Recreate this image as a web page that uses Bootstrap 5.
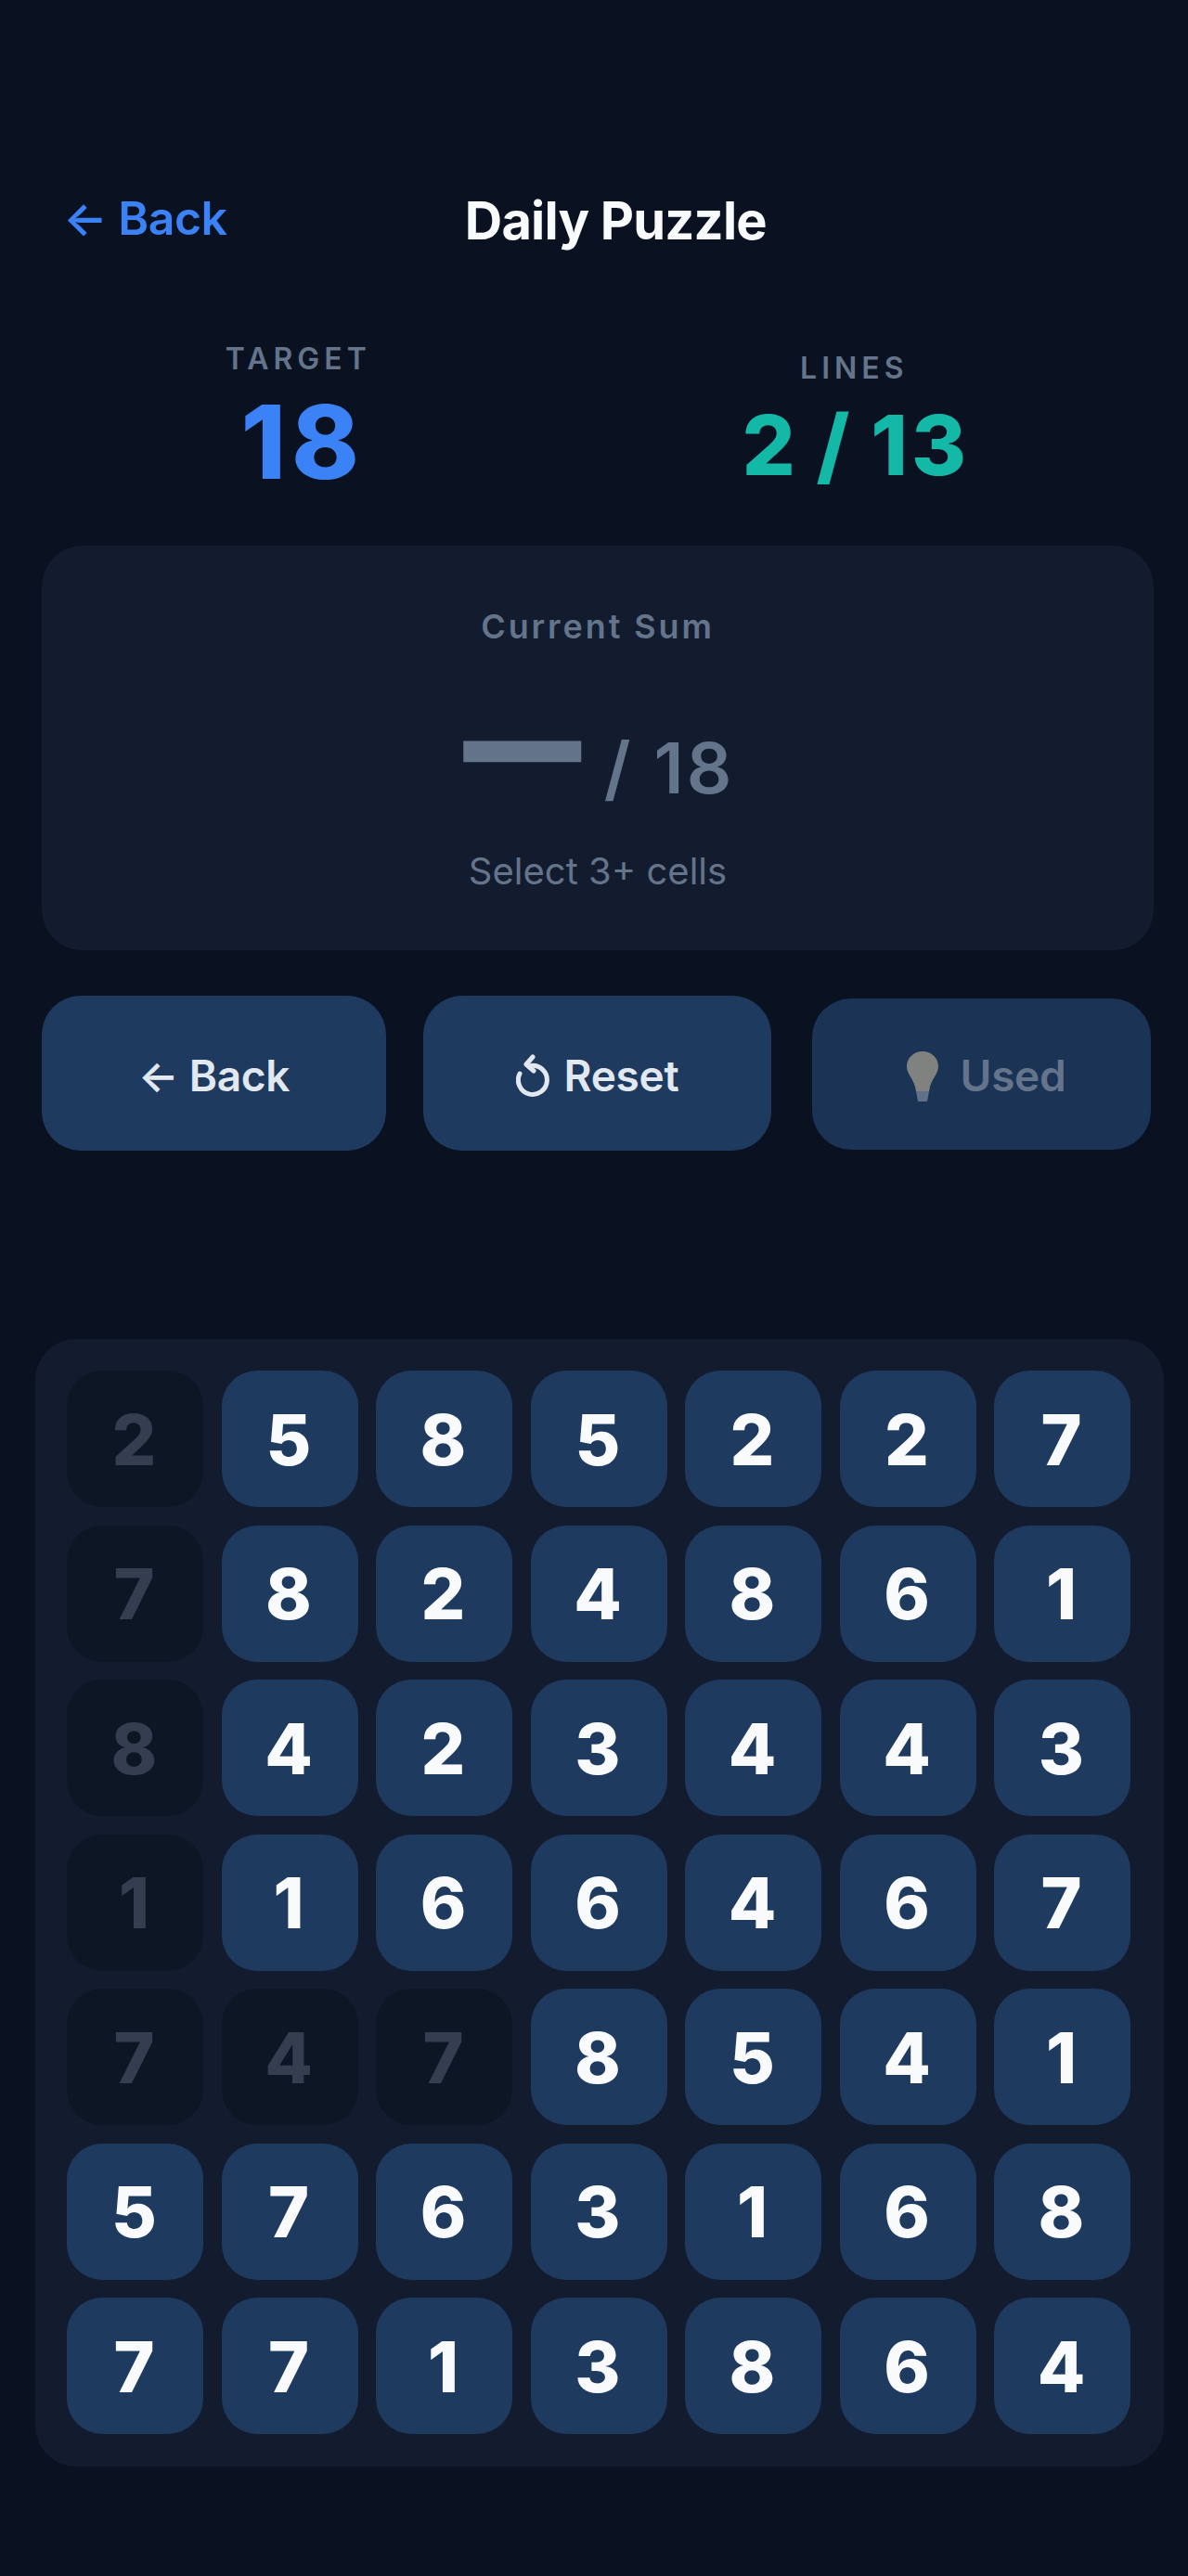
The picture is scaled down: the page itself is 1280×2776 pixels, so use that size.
<!DOCTYPE html>
<html lang="en">
<head>
<meta charset="utf-8">
<title>Daily Puzzle</title>
<link href="https://cdn.jsdelivr.net/npm/bootstrap@5.3.0/dist/css/bootstrap.min.css" rel="stylesheet">
<style>
html,body{background:#0a1120;}
body{font-family:"Inter","Liberation Sans",sans-serif;min-height:2776px;}
.shell{padding:202px 37px 0 45px;}
.topbar{height:72px;}
.backlink{color:#3b82f6;font-size:50px;font-weight:600;text-decoration:none;margin-left:23px;margin-bottom:6px;line-height:72px;letter-spacing:-.5px;}
.pagetitle{color:#f8fafc;font-size:56px;font-weight:700;margin:0;line-height:72px;letter-spacing:-.8px;}
.spacer{width:161px;}
.stats{margin-top:91px;height:178px;}
.statlabel{color:#64748b;font-size:32px;font-weight:600;letter-spacing:5px;line-height:44px;}
.stattarget{color:#3b82f6;font-size:110px;font-weight:800;line-height:134px;letter-spacing:6px;margin-left:10px;}
.statcol-lines{margin-top:10px;}
.statlines{color:#14b8a6;font-size:90px;font-weight:800;line-height:122px;letter-spacing:4px;word-spacing:-5px;margin-left:4px;}
.sumpanel{background:#131c2e;border-radius:44px;height:436px;margin-top:45px;width:1198px;padding-top:63px;}
.sumlabel{color:#64748b;font-size:36px;font-weight:600;letter-spacing:2.9px;line-height:48px;}
.sumvalue{margin-top:58px;height:110px;line-height:110px;padding-left:6px;}
.dash{color:#64748b;font-size:120px;font-weight:800;line-height:110px;-webkit-text-stroke:7px #64748b;transform:translateY(-10px);}
.of{color:#64748b;font-size:76px;font-weight:600;margin-left:28px;letter-spacing:3px;}
.sumhint{color:#64748b;font-size:40px;line-height:52px;margin-top:46px;}
.actions{margin-top:49px;width:1198px;}
.act{border:0;border-radius:42px;background:#1e3a5f;color:#e2e8f0;font-size:46px;font-weight:600;height:167px;padding:5px 0 0;letter-spacing:-.3px;}
.act svg{flex:none;}
.act-a{width:371px;}
.act-b{width:375px;margin-left:40px;}
.act-c{width:365px;height:163px;margin-left:44px;margin-top:3px;padding:4px 0 0 10px;}
.act-c:disabled{background:#1b3355;color:#64748b;opacity:1;}
.board{margin-top:203px;margin-left:-7px;width:1216px;height:1215px;background:#131c2e;border-radius:44px;padding:34px;display:grid;grid-template-columns:repeat(7,147px);grid-auto-rows:147px;gap:19.5px;}
.tile{background:#1e3a5f;color:#f8fafc;border-radius:38px;font-size:75px;font-weight:800;padding:3px 2px 0 0;}
.tile.off{background:#0d1625;color:#343e50;}
</style>
</head>
<body>
<main class="shell">
  <header class="topbar d-flex justify-content-between align-items-center">
    <a class="backlink" href="#">← Back</a>
    <h1 class="pagetitle">Daily Puzzle</h1>
    <span class="spacer"></span>
  </header>
  <section class="stats d-flex justify-content-around align-items-start text-center">
    <div>
      <div class="statlabel">TARGET</div>
      <div class="stattarget">18</div>
    </div>
    <div class="statcol-lines">
      <div class="statlabel">LINES</div>
      <div class="statlines">2 / 13</div>
    </div>
  </section>
  <section class="sumpanel text-center">
    <div class="sumlabel">Current Sum</div>
    <div class="sumvalue d-flex justify-content-center align-items-baseline"><span class="dash">—</span><span class="of">/ 18</span></div>
    <div class="sumhint">Select 3+ cells</div>
  </section>
  <section class="actions d-flex align-items-start">
    <button class="btn act act-a d-flex justify-content-center align-items-center" type="button">← Back</button>
    <button class="btn act act-b d-flex justify-content-center align-items-center gap-3" type="button">
      <svg width="36" height="46" viewBox="0 0 36 46" fill="none" stroke="#e2e8f0" stroke-width="5" stroke-linecap="round" stroke-linejoin="round"><path d="M16 12.5A15.5 15.5 0 1 1 4 21"/><path d="M18 3l-7 8 8 7"/></svg>
      Reset</button>
    <button class="btn act act-c d-flex justify-content-center align-items-center gap-4" type="button" disabled>
      <svg width="34" height="54" viewBox="0 0 34 54"><path d="M17 0C7.5 0 0 7 0 16c0 8 6 12 9 22l1 5h14l1-5c3-10 9-14 9-22C34 7 26.500 0 17 0z" fill="#80827f"/><path d="M10 43h14l-2 11H12z" fill="#5f7088"/></svg>
      Used</button>
  </section>
  <section class="board">
    <div class="tile off d-flex justify-content-center align-items-center">2</div><div class="tile d-flex justify-content-center align-items-center">5</div><div class="tile d-flex justify-content-center align-items-center">8</div><div class="tile d-flex justify-content-center align-items-center">5</div><div class="tile d-flex justify-content-center align-items-center">2</div><div class="tile d-flex justify-content-center align-items-center">2</div><div class="tile d-flex justify-content-center align-items-center">7</div>
    <div class="tile off d-flex justify-content-center align-items-center">7</div><div class="tile d-flex justify-content-center align-items-center">8</div><div class="tile d-flex justify-content-center align-items-center">2</div><div class="tile d-flex justify-content-center align-items-center">4</div><div class="tile d-flex justify-content-center align-items-center">8</div><div class="tile d-flex justify-content-center align-items-center">6</div><div class="tile d-flex justify-content-center align-items-center">1</div>
    <div class="tile off d-flex justify-content-center align-items-center">8</div><div class="tile d-flex justify-content-center align-items-center">4</div><div class="tile d-flex justify-content-center align-items-center">2</div><div class="tile d-flex justify-content-center align-items-center">3</div><div class="tile d-flex justify-content-center align-items-center">4</div><div class="tile d-flex justify-content-center align-items-center">4</div><div class="tile d-flex justify-content-center align-items-center">3</div>
    <div class="tile off d-flex justify-content-center align-items-center">1</div><div class="tile d-flex justify-content-center align-items-center">1</div><div class="tile d-flex justify-content-center align-items-center">6</div><div class="tile d-flex justify-content-center align-items-center">6</div><div class="tile d-flex justify-content-center align-items-center">4</div><div class="tile d-flex justify-content-center align-items-center">6</div><div class="tile d-flex justify-content-center align-items-center">7</div>
    <div class="tile off d-flex justify-content-center align-items-center">7</div><div class="tile off d-flex justify-content-center align-items-center">4</div><div class="tile off d-flex justify-content-center align-items-center">7</div><div class="tile d-flex justify-content-center align-items-center">8</div><div class="tile d-flex justify-content-center align-items-center">5</div><div class="tile d-flex justify-content-center align-items-center">4</div><div class="tile d-flex justify-content-center align-items-center">1</div>
    <div class="tile d-flex justify-content-center align-items-center">5</div><div class="tile d-flex justify-content-center align-items-center">7</div><div class="tile d-flex justify-content-center align-items-center">6</div><div class="tile d-flex justify-content-center align-items-center">3</div><div class="tile d-flex justify-content-center align-items-center">1</div><div class="tile d-flex justify-content-center align-items-center">6</div><div class="tile d-flex justify-content-center align-items-center">8</div>
    <div class="tile d-flex justify-content-center align-items-center">7</div><div class="tile d-flex justify-content-center align-items-center">7</div><div class="tile d-flex justify-content-center align-items-center">1</div><div class="tile d-flex justify-content-center align-items-center">3</div><div class="tile d-flex justify-content-center align-items-center">8</div><div class="tile d-flex justify-content-center align-items-center">6</div><div class="tile d-flex justify-content-center align-items-center">4</div>
  </section>
</main>
<script src="https://cdn.jsdelivr.net/npm/bootstrap@5.3.0/dist/js/bootstrap.bundle.min.js"></script>
</body>
</html>
